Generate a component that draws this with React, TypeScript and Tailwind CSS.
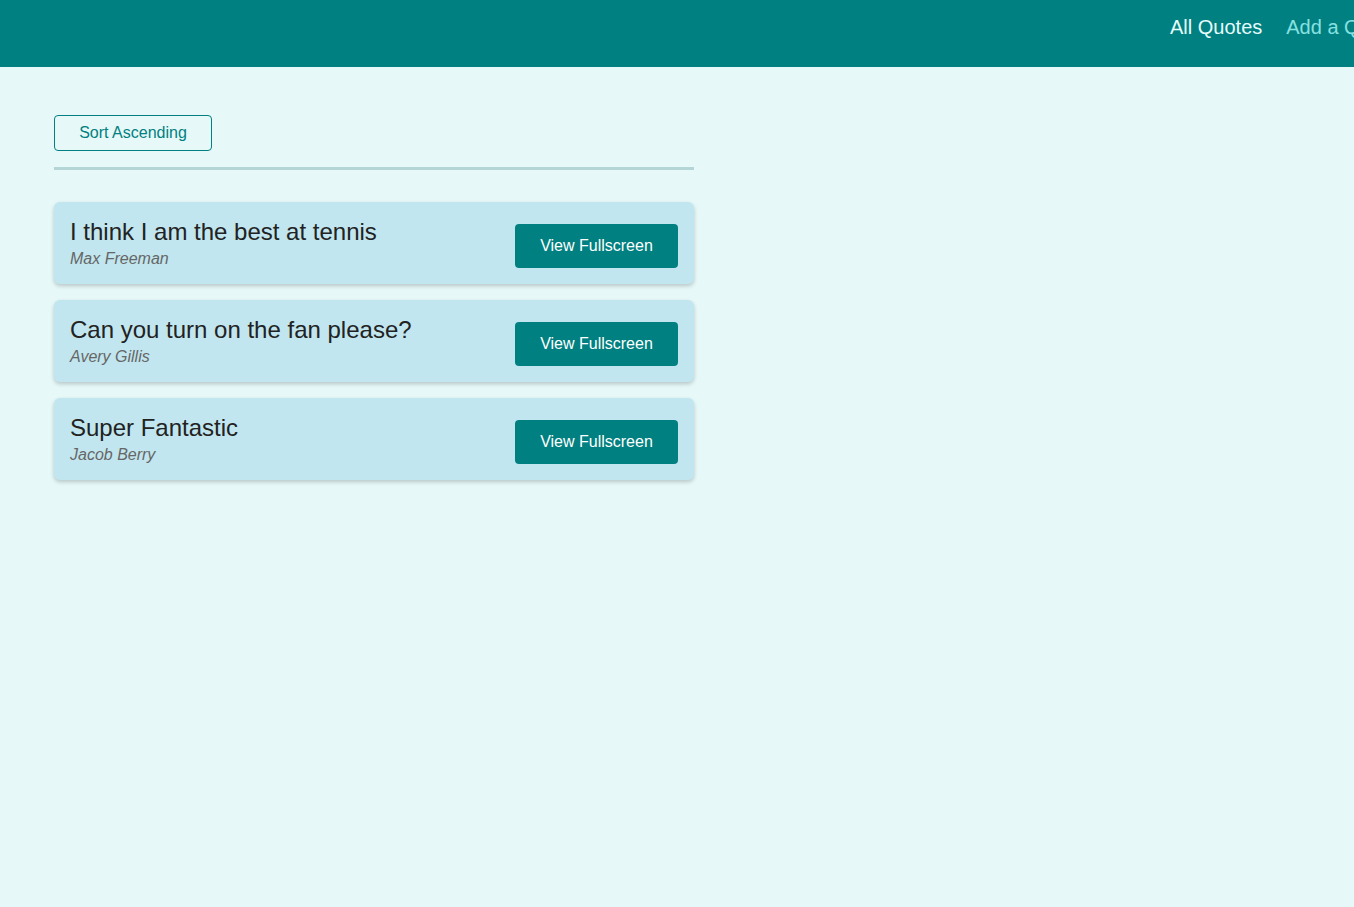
import React from "react";

const quotes = [
  { text: "I think I am the best at tennis", author: "Max Freeman" },
  { text: "Can you turn on the fan please?", author: "Avery Gillis" },
  { text: "Super Fantastic", author: "Jacob Berry" },
];

export default function App() {
  return (
    <div className="min-h-[907px] bg-[#e6f8f8] overflow-hidden" style={{ fontFamily: '"Liberation Sans", Arial, sans-serif' }}>
      <header className="h-[67px] bg-[#008080] flex items-start pl-[1170px] whitespace-nowrap">
        <nav className="flex gap-[24px] text-[20px] leading-[24px] pt-[15px]">
          <a className="text-[#e6fcfc]">All Quotes</a>
          <a className="text-[#88e1e1]">Add a Quote</a>
        </nav>
      </header>
      <main className="pl-[54px] pt-[48px] w-[694px]">
        <div className="pb-[16px] border-b-[3px] border-[#b4d6d6]">
          <button className="h-[36px] w-[158px] border border-[#008080] rounded-[4px] text-[#008080] text-[16px]">
            Sort Ascending
          </button>
        </div>
        <ul className="mt-[32px] flex flex-col gap-[16px]">
          {quotes.map((q) => (
            <li
              key={q.text}
              className="h-[82px] bg-[#c1e6ef] rounded-[6px] shadow-[0_2px_4px_rgba(0,0,0,0.2)] flex items-center justify-between px-[16px]"
            >
              <figure className="flex flex-col">
                <blockquote className="text-[24px] leading-[28px] text-[#222]">{q.text}</blockquote>
                <figcaption className="text-[16px] italic text-[#666] leading-[20px] mt-[3px]">{q.author}</figcaption>
              </figure>
              <button className="h-[44px] w-[163px] bg-[#008080] text-white text-[16px] rounded-[4px] mt-[6px]">
                View Fullscreen
              </button>
            </li>
          ))}
        </ul>
      </main>
    </div>
  );
}
